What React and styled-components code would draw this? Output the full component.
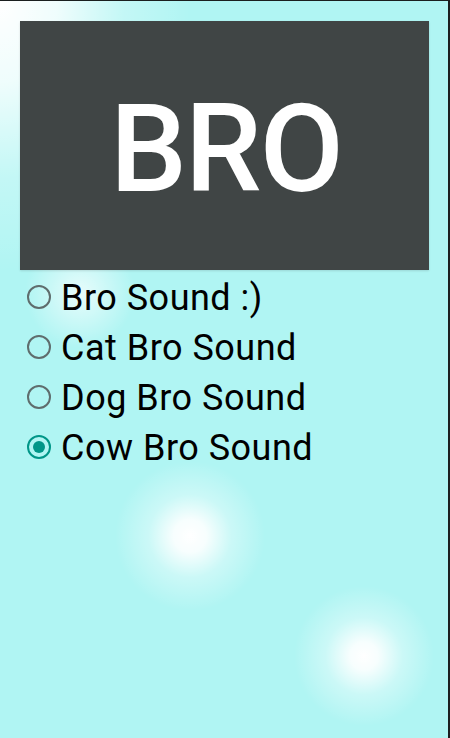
import { useState } from "react";
import styled, { createGlobalStyle } from "styled-components";

const sounds = ["Bro Sound :)", "Cat Bro Sound", "Dog Bro Sound", "Cow Bro Sound"];

const App = () => {
  const [picked, setPicked] = useState(3);

  return (
    <Page>
      <GlobalStyle />
      <Banner>
        <BannerText>BRO</BannerText>
      </Banner>
      <SoundList>
        {sounds.map((name, i) => (
          <SoundRow key={name} onClick={() => setPicked(i)}>
            <Radio checked={picked === i} />
            <SoundLabel>{name}</SoundLabel>
          </SoundRow>
        ))}
      </SoundList>
    </Page>
  );
};

export default App;

const GlobalStyle = createGlobalStyle`
  html, body {
    margin: 0;
    padding: 0;
  }
  body {
    font-family: Roboto, "Liberation Sans", sans-serif;
  }
`;

const Page = styled.div`
  box-sizing: border-box;
  width: 450px;
  height: 738px;
  padding: 20px 19px 0 20px;
  border-top: 1px solid #1a1f1f;
  border-right: 2px solid #1a1f1f;
  background-color: #b0f5f3;
  background-image:
    radial-gradient(ellipse 190px 270px at 0px 0px, #ffffff 0%, rgba(255, 255, 255, 0.8) 30%, rgba(255, 255, 255, 0.25) 65%, rgba(255, 255, 255, 0) 100%),
    radial-gradient(circle 75px at 190px 535px, #ffffff 0%, rgba(255, 255, 255, 0.9) 22%, rgba(255, 255, 255, 0.35) 55%, rgba(255, 255, 255, 0) 100%),
    radial-gradient(circle 70px at 364px 655px, #ffffff 0%, rgba(255, 255, 255, 0.9) 20%, rgba(255, 255, 255, 0.35) 55%, rgba(255, 255, 255, 0) 100%),
    radial-gradient(circle 55px at 80px 292px, rgba(255, 255, 255, 0.7) 0%, rgba(255, 255, 255, 0) 100%);
  background-repeat: no-repeat;
`;

const Banner = styled.div`
  height: 249px;
  width: 409px;
  display: flex;
  align-items: center;
  justify-content: center;
  background: #404545;
  box-shadow: 0 1px 2px rgba(0, 0, 0, 0.12);
`;

const BannerText = styled.span`
  color: #ffffff;
  font-size: 122px;
  font-weight: 500;
  line-height: 1;
  letter-spacing: -2px;
  margin-left: 3px;
  margin-top: 8px;
`;

const SoundList = styled.div`
  display: flex;
  flex-direction: column;
  padding-top: 3px;
  padding-left: 7px;
`;

const SoundRow = styled.label`
  display: flex;
  align-items: center;
  height: 50px;
  gap: 10px;
  cursor: pointer;
`;

const Radio = styled.span`
  box-sizing: border-box;
  flex: none;
  width: 24px;
  height: 24px;
  margin-top: -3px;
  border-radius: 50%;
  border: 2px solid ${(p) => (p.checked ? "#009688" : "#5f6d6d")};
  display: flex;
  align-items: center;
  justify-content: center;

  &::after {
    content: "";
    width: 12px;
    height: 12px;
    border-radius: 50%;
    background: #009688;
    display: ${(p) => (p.checked ? "block" : "none")};
  }
`;

const SoundLabel = styled.span`
  font-size: 36px;
  line-height: 50px;
  letter-spacing: 0.5px;
  color: #000000;
  white-space: nowrap;
`;
